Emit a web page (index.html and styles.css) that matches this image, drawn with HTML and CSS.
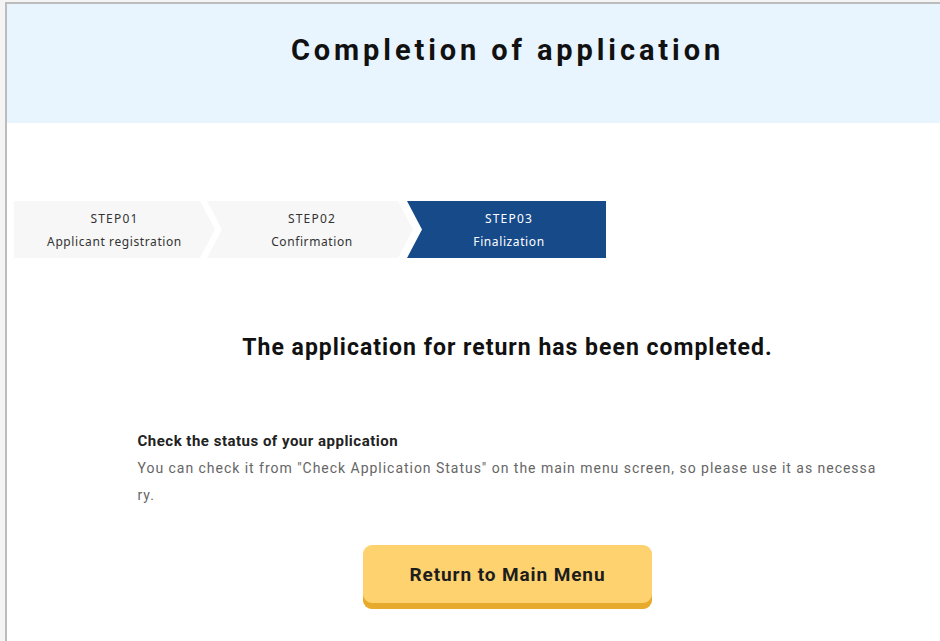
FILE: index.html
```html
<!DOCTYPE html>
<html lang="en">
<head>
<meta charset="utf-8">
<title>Completion of application</title>
<link rel="stylesheet" href="styles.css">
</head>
<body>
<div class="frame">
  <div class="page">
    <header class="page-head">
      <h1 class="page-title">Completion of application</h1>
    </header>

    <main class="page-body">
      <ol class="steps">
        <li class="step step-first">
          <span class="step-no">STEP01</span>
          <span class="step-name">Applicant registration</span>
        </li>
        <li class="step step-mid">
          <span class="step-no">STEP02</span>
          <span class="step-name">Confirmation</span>
        </li>
        <li class="step step-last is-current">
          <span class="step-no">STEP03</span>
          <span class="step-name">Finalization</span>
        </li>
      </ol>

      <h2 class="done-msg">The application for return has been completed.</h2>

      <section class="notice">
        <h3 class="notice-title">Check the status of your application</h3>
        <p class="notice-text">You can check it from "Check Application Status" on the main menu screen, so please use it as necessary.</p>
      </section>

      <div class="actions">
        <button type="button" class="btn-main">Return to Main Menu</button>
      </div>
    </main>
  </div>
</div>
</body>
</html>
```

FILE: styles.css
```css
html, body {
  margin: 0;
  padding: 0;
}

body {
  background: #f4f4f4;
  overflow: hidden;
  font-family: Roboto, "Noto Sans", "Liberation Sans", sans-serif;
  color: #222;
}

.frame {
  margin: 2px 0 0 5px;
  border-top: 2px solid #bcbcbc;
  border-left: 2px solid #bcbcbc;
  background: #fff;
  height: 700px;
}

.page {
  width: 1001px;
}

/* header band */
.page-head {
  background: #e8f5fe;
  height: 119px;
  display: flex;
  justify-content: center;
}

.page-title {
  margin: 26px 0 0;
  font-size: 29px;
  font-weight: 700;
  letter-spacing: 3.9px;
  line-height: 40px;
  color: #111;
}

.page-body {
  padding-top: 78px;
}

/* progress steps */
.steps {
  list-style: none;
  margin: 0 0 0 7px;
  padding: 0;
  display: flex;
  height: 57px;
}

.step {
  width: 201px;
  background: #f7f7f7;
  color: #333;
  font-family: "Noto Sans", "DejaVu Sans", sans-serif;
  font-size: 12px;
  letter-spacing: 0.6px;
  display: flex;
  flex-direction: column;
  align-items: center;
  justify-content: center;
  gap: 5px;
  line-height: 18px;
  padding-top: 2px;
  box-sizing: border-box;
}

.step-no {
  letter-spacing: 1.2px;
}

.step-first {
  clip-path: polygon(0 0, calc(100% - 15px) 0, 100% 50%, calc(100% - 15px) 100%, 0 100%);
}

.step-mid {
  width: 206px;
  margin-left: -8px;
  padding-left: 4px;
  clip-path: polygon(0 0, calc(100% - 15px) 0, 100% 50%, calc(100% - 15px) 100%, 0 100%, 15px 50%);
}

.step-last {
  width: 199px;
  margin-left: -6px;
  padding-left: 5px;
  clip-path: polygon(0 0, 100% 0, 100% 100%, 0 100%, 15px 50%);
}

.step.is-current {
  background: #164a89;
  color: #fff;
}

/* completion message */
.done-msg {
  margin: 72px 0 0;
  text-align: center;
  font-size: 23px;
  font-weight: 700;
  letter-spacing: 1px;
  line-height: 36px;
  color: #111;
}

.notice {
  width: 740px;
  margin: 64px auto 0;
}

.notice-title {
  margin: 0;
  font-size: 15px;
  font-weight: 700;
  letter-spacing: 0.5px;
  line-height: 22px;
  color: #222;
}

.notice-text {
  margin: 3px 0 0;
  font-size: 14px;
  line-height: 27px;
  color: #666;
  letter-spacing: 0.97px;
  word-break: break-all;
}

.actions {
  display: flex;
  justify-content: center;
  margin-top: 36px;
}

.btn-main {
  width: 289px;
  height: 64px;
  border: 0;
  border-radius: 9px;
  background: #fdd26f;
  box-shadow: inset 0 -6px 0 #e7aa2c;
  padding: 0 0 6px;
  font-family: inherit;
  font-size: 19px;
  font-weight: 700;
  letter-spacing: 0.9px;
  color: #1d1d1d;
  cursor: pointer;
}
```
